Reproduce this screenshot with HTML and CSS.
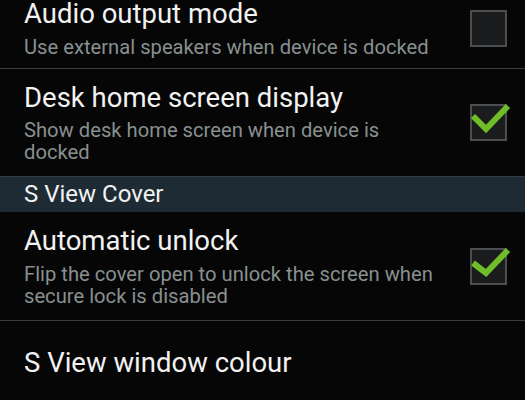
FILE: index.html
```html
<!DOCTYPE html>
<html lang="en">

<head>
    <meta charset="UTF-8">
    <meta name="viewport" content="width=device-width, initial-scale=1.0">
    <title>Dock settings</title>

    <link rel="stylesheet" href="styles.css">

</head>

<body>
    <main class="settings">
        <div class="item first">
            <div class="text">
                <p class="title">Audio output mode</p>
                <p class="summary">Use external speakers when device is docked</p>
            </div>
            <div class="check"></div>
        </div>

        <div class="item">
            <div class="text">
                <p class="title">Desk home screen display</p>
                <p class="summary">Show desk home screen when device is docked</p>
            </div>
            <div class="check">
                <svg class="tick" width="37" height="37" viewBox="0 0 37 37">
                    <polyline points="3,12 16,25 38,2" />
                </svg>
            </div>
        </div>

        <div class="section">S View Cover</div>

        <div class="item">
            <div class="text">
                <p class="title">Automatic unlock</p>
                <p class="summary">Flip the cover open to unlock the screen when secure lock is disabled</p>
            </div>
            <div class="check">
                <svg class="tick" width="37" height="37" viewBox="0 0 37 37">
                    <polyline points="3,15 16,25 38,2" />
                </svg>
            </div>
        </div>

        <div class="item last">
            <div class="text">
                <p class="title">S View window colour</p>
            </div>
        </div>
    </main>
</body>

</html>
```

FILE: styles.css
```css
* {
    margin: 0;
    padding: 0;
    box-sizing: border-box;
}

:root {
    --bg-color: #060606;
    --title-color: #f2f2f2;
    --summary-color: #889090;
    --line-color: #3a3d3f;
    --header-color: #1f2b34;
    --tick-color: #6fbd28;
}

body {
    background-color: var(--bg-color);
    font-family: 'Roboto', sans-serif;
    overflow: hidden;
}

.settings {
    display: flex;
    flex-direction: column;
}

.item {
    display: flex;
    align-items: center;
    padding: 14px 18px 13px 24px;
    border-bottom: 1px solid var(--line-color);
}

.item.first {
    margin-top: -15px;
    padding-bottom: 10px;
}

.item.last {
    border-bottom: none;
    padding-top: 27px;
}

.text {
    flex: 1;
    padding-right: 25px;
}

.title {
    color: var(--title-color);
    font-size: 27.5px;
    line-height: 30px;
}

.summary {
    color: var(--summary-color);
    font-size: 20.2px;
    line-height: 22px;
    margin-top: 6.5px;
}

.check {
    width: 37px;
    height: 37px;
    border: 2px solid #4b4d4e;
    background-color: #1b1c1d;
    flex-shrink: 0;
    position: relative;
}

.tick {
    position: absolute;
    left: -2px;
    top: -2px;
    overflow: visible;
}

.tick polyline {
    fill: none;
    stroke: var(--tick-color);
    stroke-width: 6;
    stroke-linecap: butt;
    stroke-linejoin: miter;
}

.section {
    background-color: var(--header-color);
    color: var(--title-color);
    font-size: 24px;
    height: 35px;
    line-height: 35px;
    padding-left: 24px;
}
```
